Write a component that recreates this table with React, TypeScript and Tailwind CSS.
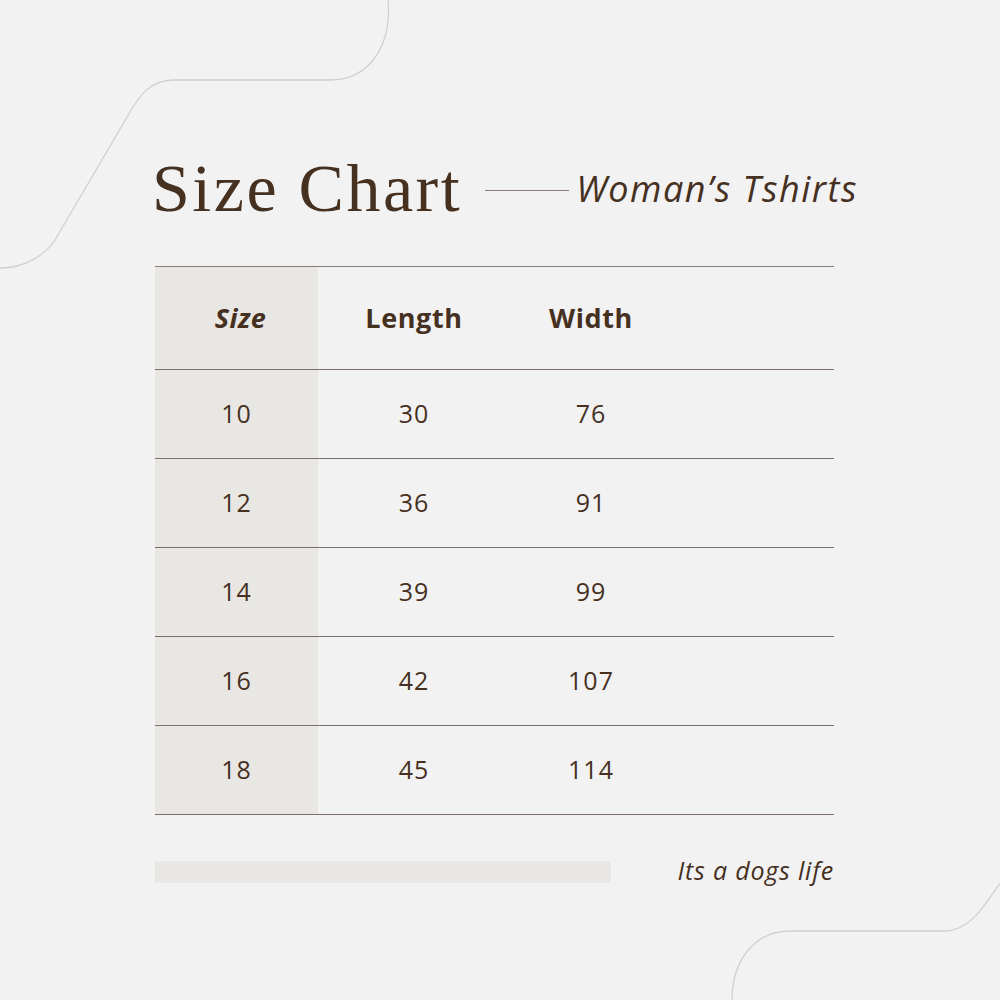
const rows = [
  ['10', '30', '76'],
  ['12', '36', '91'],
  ['14', '39', '99'],
  ['16', '42', '107'],
  ['18', '45', '114'],
];

function Curves() {
  return (
    <svg className="absolute inset-0 pointer-events-none" width="1000" height="1000" viewBox="0 0 1000 1000" fill="none">
      <path
        d="M388 0 C392 45 370 80 330 80 L175 80 C150 80 140 95 130 112 L55 240 C45 255 25 268 0 268"
        stroke="#d6cec9"
        strokeWidth="1.3"
      />
      <path
        d="M1000 883 C985 905 970 931 945 931 L790 931 C755 931 732 960 732 1000"
        stroke="#d6cec9"
        strokeWidth="1.3"
      />
    </svg>
  );
}

export default function App() {
  return (
    <div className="relative w-[1000px] h-[1000px] overflow-hidden bg-[#f2f2f2] text-[#46301f]">
      <Curves />
      <div className="relative flex flex-col pl-[155px] pr-[166px] pt-[148px]">
        <div className="flex items-center -ml-[3px] -mr-[60px] whitespace-nowrap">
          <h1 className="shrink-0 font-['Liberation_Serif',serif] text-[68px] leading-[80px] tracking-[2.5px]">Size Chart</h1>
          <div className="shrink-0 ml-[23px] mt-[4px] h-px w-[84px] bg-[#8a7d76]" />
          <p className="shrink-0 ml-[7px] mt-[2px] font-['Open_Sans',sans-serif] italic text-[36px] leading-[40px] tracking-[1.5px]">Woman’s Tshirts</p>
        </div>

        <div className="mt-[38px] border-t-[1.5px] border-[#8a7d76] font-['Open_Sans',sans-serif]">
          <div className="grid grid-cols-[163px_192px_162px_1fr] h-[103px] border-b border-[#7d706a]">
            <div className="bg-[#e8e7e3] flex items-center justify-center pl-[8px] text-[27px] font-bold italic tracking-[0.5px]">Size</div>
            <div className="flex items-center justify-center text-[27px] font-bold tracking-[0.6px]">Length</div>
            <div className="flex items-center justify-center text-[27px] font-bold tracking-[0.6px]">Width</div>
            <div />
          </div>
          {rows.map((r) => (
            <div key={r[0]} className="grid grid-cols-[163px_192px_162px_1fr] h-[89px] border-b border-[#7d706a]">
              <div className="bg-[#e8e7e3] flex items-center justify-center text-[25px] tracking-[1px]">{r[0]}</div>
              <div className="flex items-center justify-center text-[25px] tracking-[1px]">{r[1]}</div>
              <div className="flex items-center justify-center text-[25px] tracking-[1px]">{r[2]}</div>
              <div />
            </div>
          ))}
        </div>

        <div className="mt-[43px] flex items-center justify-between">
          <div className="h-[22px] w-[456px] bg-[#e8e7e3]" />
          <p className="-mt-[3px] whitespace-nowrap font-['Open_Sans',sans-serif] italic text-[25px] leading-[30px] tracking-[0.8px]">Its a dogs life</p>
        </div>
      </div>
    </div>
  );
}
